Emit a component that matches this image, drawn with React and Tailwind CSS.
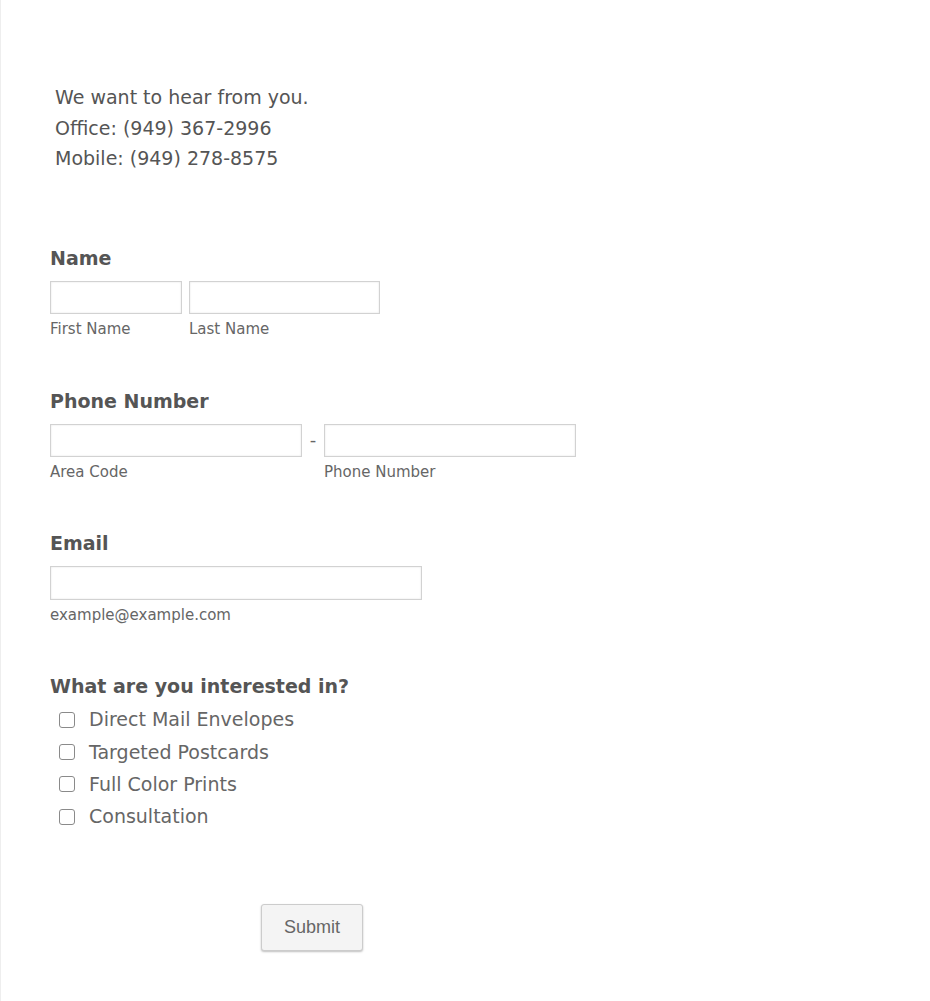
const font = { fontFamily: '"DejaVu Sans", Verdana, sans-serif' }

const interests = ["Direct Mail Envelopes", "Targeted Postcards", "Full Color Prints", "Consultation"]

function Field({ className }) {
  return (
    <input
      type="text"
      className={`border border-[#d2d2d2] bg-white shadow-[inset_0_0_2px_rgba(0,0,0,0.12)] outline-none ${className}`}
    />
  )
}

function Label({ children }) {
  return <h3 className="text-[19px] font-bold leading-[24px] text-[#555]">{children}</h3>
}

function Sub({ children }) {
  return <span className="mt-[5px] block text-[15px] leading-[20px] text-[#666]">{children}</span>
}

export default function App() {
  return (
    <div style={font} className="min-h-[1001px] border-l border-[#eee] bg-white text-[#555]">
      <div className="pl-[54px] pt-[82px] text-[19px] leading-[30.5px] text-[#555]">
        <p>We want to hear from you.</p>
        <p>Office: (949) 367-2996</p>
        <p>Mobile: (949) 278-8575</p>
      </div>

      <form className="pl-[49px] pt-[72px]">
        <Label>Name</Label>
        <div className="mt-[11px] flex gap-[7px]">
          <div>
            <Field className="h-[33px] w-[132px]" />
            <Sub>First Name</Sub>
          </div>
          <div>
            <Field className="h-[33px] w-[191px]" />
            <Sub>Last Name</Sub>
          </div>
        </div>

        <div className="mt-[50px]">
          <Label>Phone Number</Label>
          <div className="mt-[11px] flex">
            <div>
              <Field className="h-[33px] w-[252px]" />
              <Sub>Area Code</Sub>
            </div>
            <span className="w-[22px] pt-[4px] text-center text-[18px] leading-[24px] text-[#666]">-</span>
            <div>
              <Field className="h-[33px] w-[252px]" />
              <Sub>Phone Number</Sub>
            </div>
          </div>
        </div>

        <div className="mt-[49px]">
          <Label>Email</Label>
          <div className="mt-[11px]">
            <Field className="h-[34px] w-[372px]" />
            <Sub>example@example.com</Sub>
          </div>
        </div>

        <div className="mt-[49px]">
          <Label>What are you interested in?</Label>
          <ul className="mt-[6px]">
            {interests.map((item) => (
              <li key={item} className="flex h-[32.3px] items-center text-[19px] text-[#666]">
                <span className="ml-[9px] mr-[14px] h-[16px] w-[16px] rounded-[3px] border border-[#8a8a8a] bg-white" />
                {item}
              </li>
            ))}
          </ul>
        </div>

        <div className="pl-[211px] pt-[71px]">
          <button
            type="button"
            className="h-[47px] w-[102px] rounded-[3px] border border-[#ccc] bg-[#f4f4f4] text-[18px] text-[#666] shadow-[0_1px_2px_rgba(0,0,0,0.25)]"
            style={{ fontFamily: '"Liberation Sans", Arial, sans-serif' }}
          >
            Submit
          </button>
        </div>
      </form>
    </div>
  )
}
